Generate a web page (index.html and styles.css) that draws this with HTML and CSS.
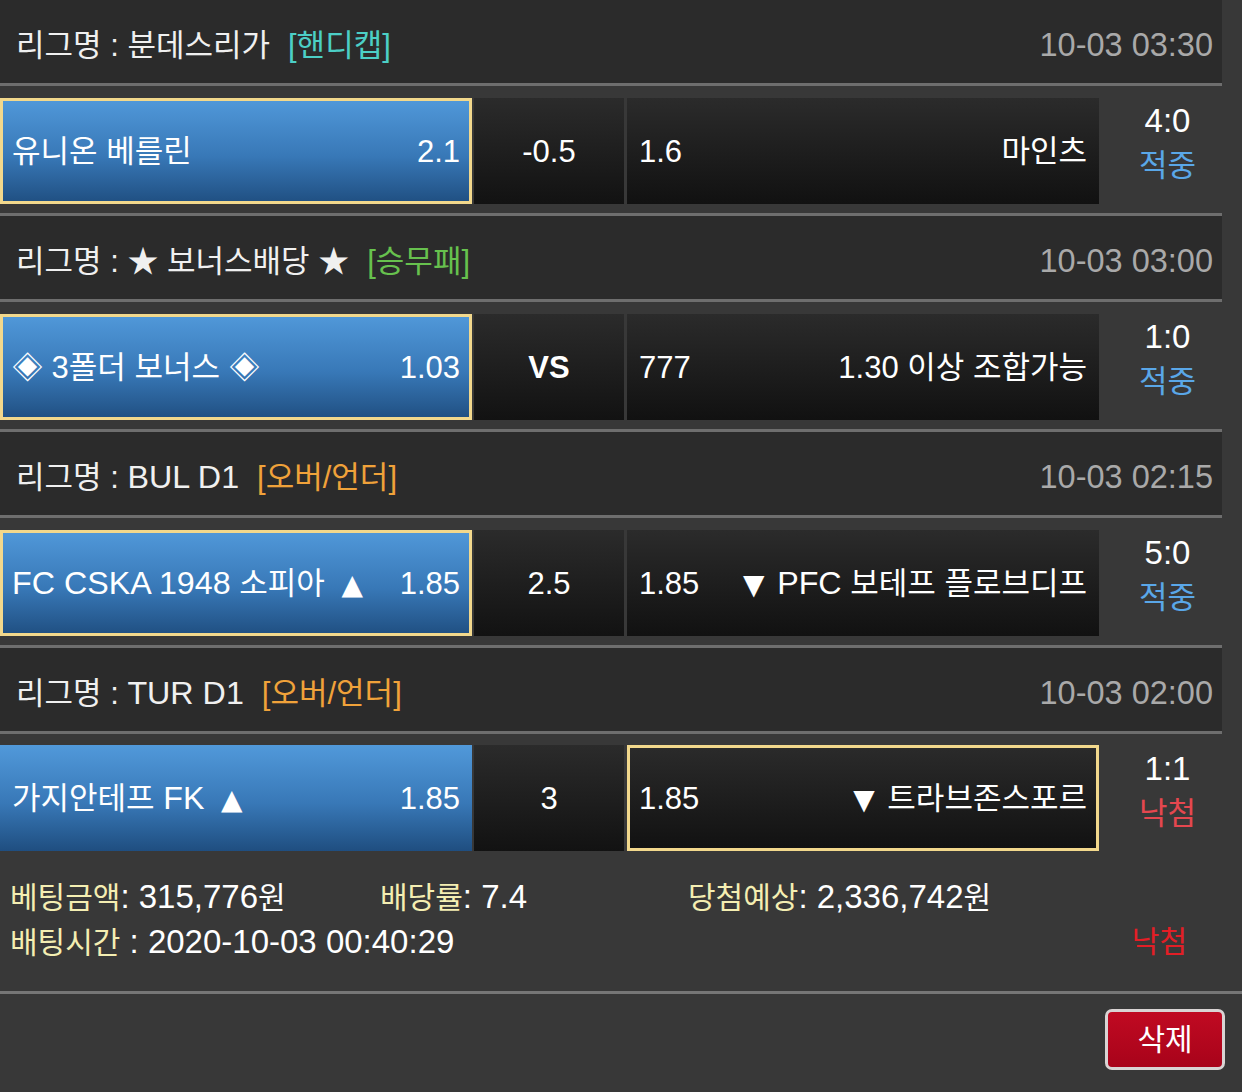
FILE: index.html
```html
<!DOCTYPE html>
<html lang="ko">
<head>
<meta charset="utf-8">
<link rel="stylesheet" href="styles.css">
</head>
<body>
<div class="list">
  <div class="block">
    <div class="league">
      <div class="league-name">리그명 : 분데스리가<span class="tag tag-handi">[핸디캡]</span></div>
      <div class="date">10-03 03:30</div>
    </div>
    <div class="bet">
      <div class="cell home selected"><span>유니온 베를린</span><span>2.1</span></div>
      <div class="cell mid">-0.5</div>
      <div class="cell away"><span>1.6</span><span>마인츠</span></div>
      <div class="result"><span class="score">4:0</span><span class="hit">적중</span></div>
    </div>
  </div>
  <div class="block">
    <div class="league">
      <div class="league-name">리그명 : ★ 보너스배당 ★<span class="tag tag-wdl">[승무패]</span></div>
      <div class="date">10-03 03:00</div>
    </div>
    <div class="bet">
      <div class="cell home selected"><span>◈ 3폴더 보너스 ◈</span><span>1.03</span></div>
      <div class="cell mid vs">VS</div>
      <div class="cell away"><span>777</span><span>1.30 이상 조합가능</span></div>
      <div class="result"><span class="score">1:0</span><span class="hit">적중</span></div>
    </div>
  </div>
  <div class="block">
    <div class="league">
      <div class="league-name">리그명 : <span class="num">BUL D1</span><span class="tag tag-ou">[오버/언더]</span></div>
      <div class="date">10-03 02:15</div>
    </div>
    <div class="bet">
      <div class="cell home selected"><span><span class="num">FC CSKA 1948</span> 소피아 <span class="tri tri-up">▲</span></span><span>1.85</span></div>
      <div class="cell mid">2.5</div>
      <div class="cell away"><span>1.85</span><span><span class="tri tri-down">▼</span> <span class="num">PFC</span> 보테프 플로브디프</span></div>
      <div class="result"><span class="score">5:0</span><span class="hit">적중</span></div>
    </div>
  </div>
  <div class="block last">
    <div class="league">
      <div class="league-name">리그명 : <span class="num">TUR D1</span><span class="tag tag-ou">[오버/언더]</span></div>
      <div class="date">10-03 02:00</div>
    </div>
    <div class="bet">
      <div class="cell home"><span>가지안테프 <span class="num">FK</span> <span class="tri tri-up">▲</span></span><span>1.85</span></div>
      <div class="cell mid">3</div>
      <div class="cell away selected"><span>1.85</span><span><span class="tri tri-down">▼</span> 트라브존스포르</span></div>
      <div class="result"><span class="score">1:1</span><span class="miss">낙첨</span></div>
    </div>
  </div>
</div>
<div class="summary">
  <div class="sum-line">
    <div class="sum-item sum-amount"><span class="label">베팅금액</span><span class="num">: 315,776</span>원</div>
    <div class="sum-item sum-rate"><span class="label">배당률</span><span class="num">: 7.4</span></div>
    <div class="sum-item"><span class="label">당첨예상</span><span class="num">: 2,336,742</span>원</div>
  </div>
  <div class="sum-line">
    <div class="sum-item"><span class="label">배팅시간</span><span class="num"> : 2020-10-03 00:40:29</span></div>
    <div class="sum-status">낙첨</div>
  </div>
</div>
<div class="actions">
  <button class="btn-delete">삭제</button>
</div>
</body>
</html>
```

FILE: styles.css
```css
html, body {
  margin: 0;
  padding: 0;
}
body {
  background: #383838;
  color: #ffffff;
  font-family: "Liberation Sans", "Noto Sans CJK KR", sans-serif;
  font-size: 31px;
  width: 1242px;
  height: 1092px;
  overflow: hidden;
}
.list {
  width: 1222px;
}
.league {
  box-sizing: border-box;
  height: 86px;
  background: #2b2b2b;
  border-bottom: 3px solid #6e6e6e;
  display: flex;
  align-items: center;
  justify-content: space-between;
  padding: 8px 9px 0 16px;
  line-height: 1;
}
.league-name {
  color: #f0f0f0;
}
.tag {
  margin-left: 18px;
}
.tag-handi { color: #4ccfc6; }
.tag-wdl { color: #67c14e; }
.tag-ou { color: #f0a23a; }
.date {
  color: #a9a9a9;
  font-size: 32.5px;
}
.num {
  font-size: 1.04em;
}
.tri {
  font-family: "DejaVu Sans", sans-serif;
  font-size: 0.9em;
}
.tri-up {
  margin-left: 8px;
}
.tri-down {
  margin-right: 4px;
}
.bet {
  box-sizing: border-box;
  height: 130px;
  padding: 12px 0 12px;
  display: flex;
  border-bottom: 3px solid #6e6e6e;
}
.last .bet {
  border-bottom: none;
  height: 117px;
  padding: 11px 0 0;
}
.cell {
  box-sizing: border-box;
  height: 106px;
  border: 3px solid transparent;
  background-origin: border-box;
  display: flex;
  align-items: center;
  justify-content: space-between;
  padding: 0 9px;
  line-height: 1;
  color: #ffffff;
}
.home {
  width: 472px;
  background-image: linear-gradient(#5199da, #3878b7 55%, #1f4e80);
}
.mid {
  width: 150px;
  margin-left: 2px;
  justify-content: center;
  background-image: linear-gradient(#2b2b2b, #121212);
}
.vs {
  font-weight: bold;
}
.away {
  width: 472px;
  margin-left: 3px;
  background-image: linear-gradient(#2b2b2b, #111111);
}
.cell.selected {
  border-color: #f2d88c;
}
.result {
  flex: 1;
  display: flex;
  flex-direction: column;
  align-items: center;
  justify-content: center;
  line-height: 45px;
  padding: 0 0 14px 14px;
}
.score {
  font-size: 33px;
}
.hit {
  color: #5aa7e8;
}
.miss {
  color: #e5474f;
}
.summary {
  box-sizing: border-box;
  width: 1242px;
  padding: 23px 55px 27px 10px;
  border-bottom: 3px solid #767676;
  font-size: 30px;
  line-height: 45px;
}
.summary .num {
  font-size: 33px;
}
.sum-line {
  display: flex;
  justify-content: space-between;
  height: 45px;
}
.sum-line:first-child {
  justify-content: flex-start;
}
.sum-amount {
  width: 370px;
}
.sum-rate {
  width: 308px;
}
.label {
  color: #f4eeb2;
}
.sum-status {
  color: #e41e26;
}
.actions {
  display: flex;
  justify-content: flex-end;
  padding: 15px 17px 0 0;
}
.btn-delete {
  width: 120px;
  height: 61px;
  border: 3px solid #d9d4d4;
  border-radius: 7px;
  background: linear-gradient(#c00a22, #a8031a);
  color: #ffffff;
  font-family: "Liberation Sans", "Noto Sans CJK KR", sans-serif;
  font-size: 30px;
  line-height: 1;
  padding: 0;
}
```
